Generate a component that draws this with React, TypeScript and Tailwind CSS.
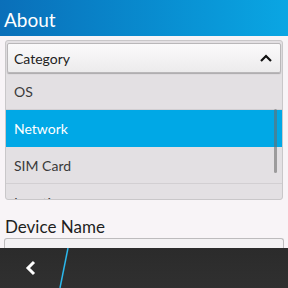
export default function App() {
  const items = ["OS", "Network", "SIM Card", "Location"];
  return (
    <main
      className="w-[288px] h-[288px] flex flex-col bg-[#f8f4f7] overflow-hidden"
      style={{ fontFamily: 'Lato, "Open Sans", "Liberation Sans", sans-serif' }}
    >
      <header className="h-[36px] shrink-0 flex items-center px-[4px] pt-[3px] bg-gradient-to-r from-[#0a6fb9] to-[#0aa6e3]">
        <h1 className="text-white text-[19px] leading-none">About</h1>
      </header>

      <div className="h-[160px] shrink-0 mt-[4px] mx-[5px] border border-[#c9c7c9] rounded-[3px] bg-[#e3e0e3] flex flex-col overflow-hidden">
        <div className="h-[30px] shrink-0 mx-[1px] mt-[2px] flex items-center justify-between pl-[6px] pr-[8px] bg-gradient-to-b from-[#fbfafb] to-[#ecebec] border border-[#b9b7b9] rounded-[2px] shadow-[0_1px_1px_rgba(0,0,0,0.25)]">
          <span className="text-[14px] text-[#222]">Category</span>
          <svg width="12" height="8" viewBox="0 0 12 8">
            <path d="M1 7 L6 2 L11 7" fill="none" stroke="#111" strokeWidth="2.2" />
          </svg>
        </div>
        <div className="relative flex-1 flex flex-col">
          {items.map((t, i) => (
            <div
              key={t}
              className={
                i === 1
                  ? "h-[37px] shrink-0 flex items-center px-[8px] text-[14px] text-white bg-[#00a8e6]"
                  : "h-[37px] shrink-0 flex items-center px-[8px] text-[14px] text-[#3a3a3a] border-b border-[#d2cfd2]"
              }
            >
              {t}
            </div>
          ))}
          <div className="absolute right-[5px] top-[36px] w-[3px] h-[64px] rounded-full bg-[#6c6c6c]/60" />
        </div>
      </div>

      <div className="mt-[18px] px-[5px] text-[17px] leading-none text-[#1e1e1e]">Device Name</div>
      <div className="mt-[3px] mx-[4px] h-[10px] border border-b-0 border-[#bdbbbd] rounded-t-[3px] bg-[#f3f1f3]" />

      <footer className="relative flex-1 bg-gradient-to-b from-[#2b2b2b] to-[#303030] flex items-center pl-[24px]">
        <svg width="14" height="16" viewBox="0 0 14 16">
          <path d="M10 2 L4 8 L10 14" fill="none" stroke="#fff" strokeWidth="3" />
        </svg>
        <svg className="absolute left-[58px] top-0" width="12" height="40" viewBox="0 0 12 40">
          <line x1="10" y1="0" x2="2" y2="40" stroke="#2bb8ec" strokeWidth="1.5" />
        </svg>
      </footer>
    </main>
  );
}
